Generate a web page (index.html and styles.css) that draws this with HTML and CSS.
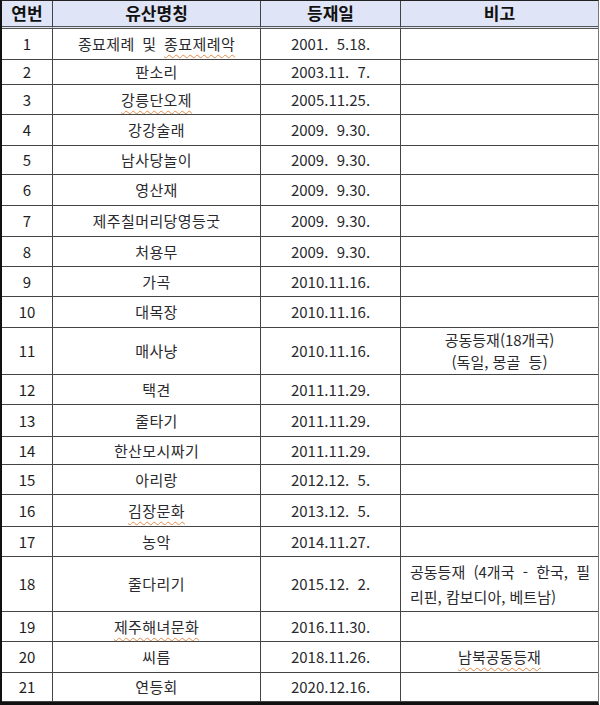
FILE: index.html
```html
<!DOCTYPE html>
<html lang="ko">
<head>
<meta charset="utf-8">
<link rel="stylesheet" href="styles.css">
</head>
<body>
<div class="table">
  <div class="c hd">연번</div><div class="c hd">유산명칭</div><div class="c hd">등재일</div><div class="c hd last">비고</div>

  <div class="c n">1</div><div class="c nm"><span>종묘제례 및 <span class="sp">종묘제례악</span></span></div><div class="c">2001.&nbsp; 5.18.</div><div class="c last"></div>
  <div class="c n">2</div><div class="c nm">판소리</div><div class="c">2003.11.&nbsp; 7.</div><div class="c last"></div>
  <div class="c n">3</div><div class="c nm"><span class="sp">강릉단오제</span></div><div class="c">2005.11.25.</div><div class="c last"></div>
  <div class="c n">4</div><div class="c nm">강강술래</div><div class="c">2009.&nbsp; 9.30.</div><div class="c last"></div>
  <div class="c n">5</div><div class="c nm">남사당놀이</div><div class="c">2009.&nbsp; 9.30.</div><div class="c last"></div>
  <div class="c n">6</div><div class="c nm">영산재</div><div class="c">2009.&nbsp; 9.30.</div><div class="c last"></div>
  <div class="c n">7</div><div class="c nm">제주칠머리당영등굿</div><div class="c">2009.&nbsp; 9.30.</div><div class="c last"></div>
  <div class="c n">8</div><div class="c nm">처용무</div><div class="c">2009.&nbsp; 9.30.</div><div class="c last"></div>
  <div class="c n">9</div><div class="c nm">가곡</div><div class="c">2010.11.16.</div><div class="c last"></div>
  <div class="c n">10</div><div class="c nm">대목장</div><div class="c">2010.11.16.</div><div class="c last"></div>
  <div class="c n">11</div><div class="c nm">매사냥</div><div class="c">2010.11.16.</div><div class="c last note2">공동등재(18개국)<br>(독일, 몽골&nbsp; 등)</div>
  <div class="c n">12</div><div class="c nm">택견</div><div class="c">2011.11.29.</div><div class="c last"></div>
  <div class="c n">13</div><div class="c nm">줄타기</div><div class="c">2011.11.29.</div><div class="c last"></div>
  <div class="c n">14</div><div class="c nm">한산모시짜기</div><div class="c">2011.11.29.</div><div class="c last"></div>
  <div class="c n">15</div><div class="c nm">아리랑</div><div class="c">2012.12.&nbsp; 5.</div><div class="c last"></div>
  <div class="c n">16</div><div class="c nm"><span class="sp">김장문화</span></div><div class="c">2013.12.&nbsp; 5.</div><div class="c last"></div>
  <div class="c n">17</div><div class="c nm">농악</div><div class="c">2014.11.27.</div><div class="c last"></div>
  <div class="c n">18</div><div class="c nm">줄다리기</div><div class="c">2015.12.&nbsp; 2.</div><div class="c last note3"><span class="l1">공동등재 (4개국 - 한국, 필</span><span class="l2">리핀, 캄보디아, 베트남)</span></div>
  <div class="c n">19</div><div class="c nm"><span class="sp">제주해녀문화</span></div><div class="c">2016.11.30.</div><div class="c last"></div>
  <div class="c n">20</div><div class="c nm">씨름</div><div class="c">2018.11.26.</div><div class="c last"><span class="sp">남북공동등재</span></div>
  <div class="c n">21</div><div class="c nm">연등회</div><div class="c">2020.12.16.</div><div class="c last"></div>
</div>
</body>
</html>
```

FILE: styles.css
```css
html, body {
  margin: 0;
  padding: 0;
  background: #ffffff;
}

.table {
  display: grid;
  width: 599px;
  box-sizing: border-box;
  grid-template-columns: 51px 208px 140px 197px;
  grid-template-rows: 28px 31px 25px 30px 31px 29px 31px 31px 30px 30px 31px 47px 30px 32px 28px 30px 32px 30px 55px 30px 31px 29px;
  border-top: 1px solid #222;
  border-left: 2px solid #111;
  border-right: 1px solid #777;
  border-bottom: 3px solid #111;
  font-family: "Noto Sans CJK KR", "Noto Sans", sans-serif;
  font-size: 15px;
  color: #2a2a2e;
}

.c {
  box-sizing: border-box;
  border-right: 1px solid #444;
  border-bottom: 1px solid #444;
  display: flex;
  align-items: center;
  justify-content: center;
  text-align: center;
  white-space: pre;
  line-height: 1.2;
}

.c.last {
  border-right: none;
}

.nm {
  letter-spacing: 0.4px;
  word-spacing: 3px;
}

.hd {
  background: #dfe4f6;
  font-weight: 700;
  font-size: 17px;
  color: #111;
  border-bottom: 3px double #555;
}

.n {
  color: #1e1e22;
}

.sp {
  text-decoration: underline wavy #e58a4a;
  text-decoration-thickness: 1px;
  text-underline-offset: 4px;
}

.note2 {
  line-height: 22px;
  white-space: normal;
}

.note3 {
  flex-direction: column;
  align-items: stretch;
  padding: 0 8px 0 9px;
  line-height: 25px;
  white-space: normal;
}

.note3 .l1 {
  display: block;
  text-align: justify;
  text-align-last: justify;
}

.note3 .l2 {
  display: block;
  text-align: left;
}
```
